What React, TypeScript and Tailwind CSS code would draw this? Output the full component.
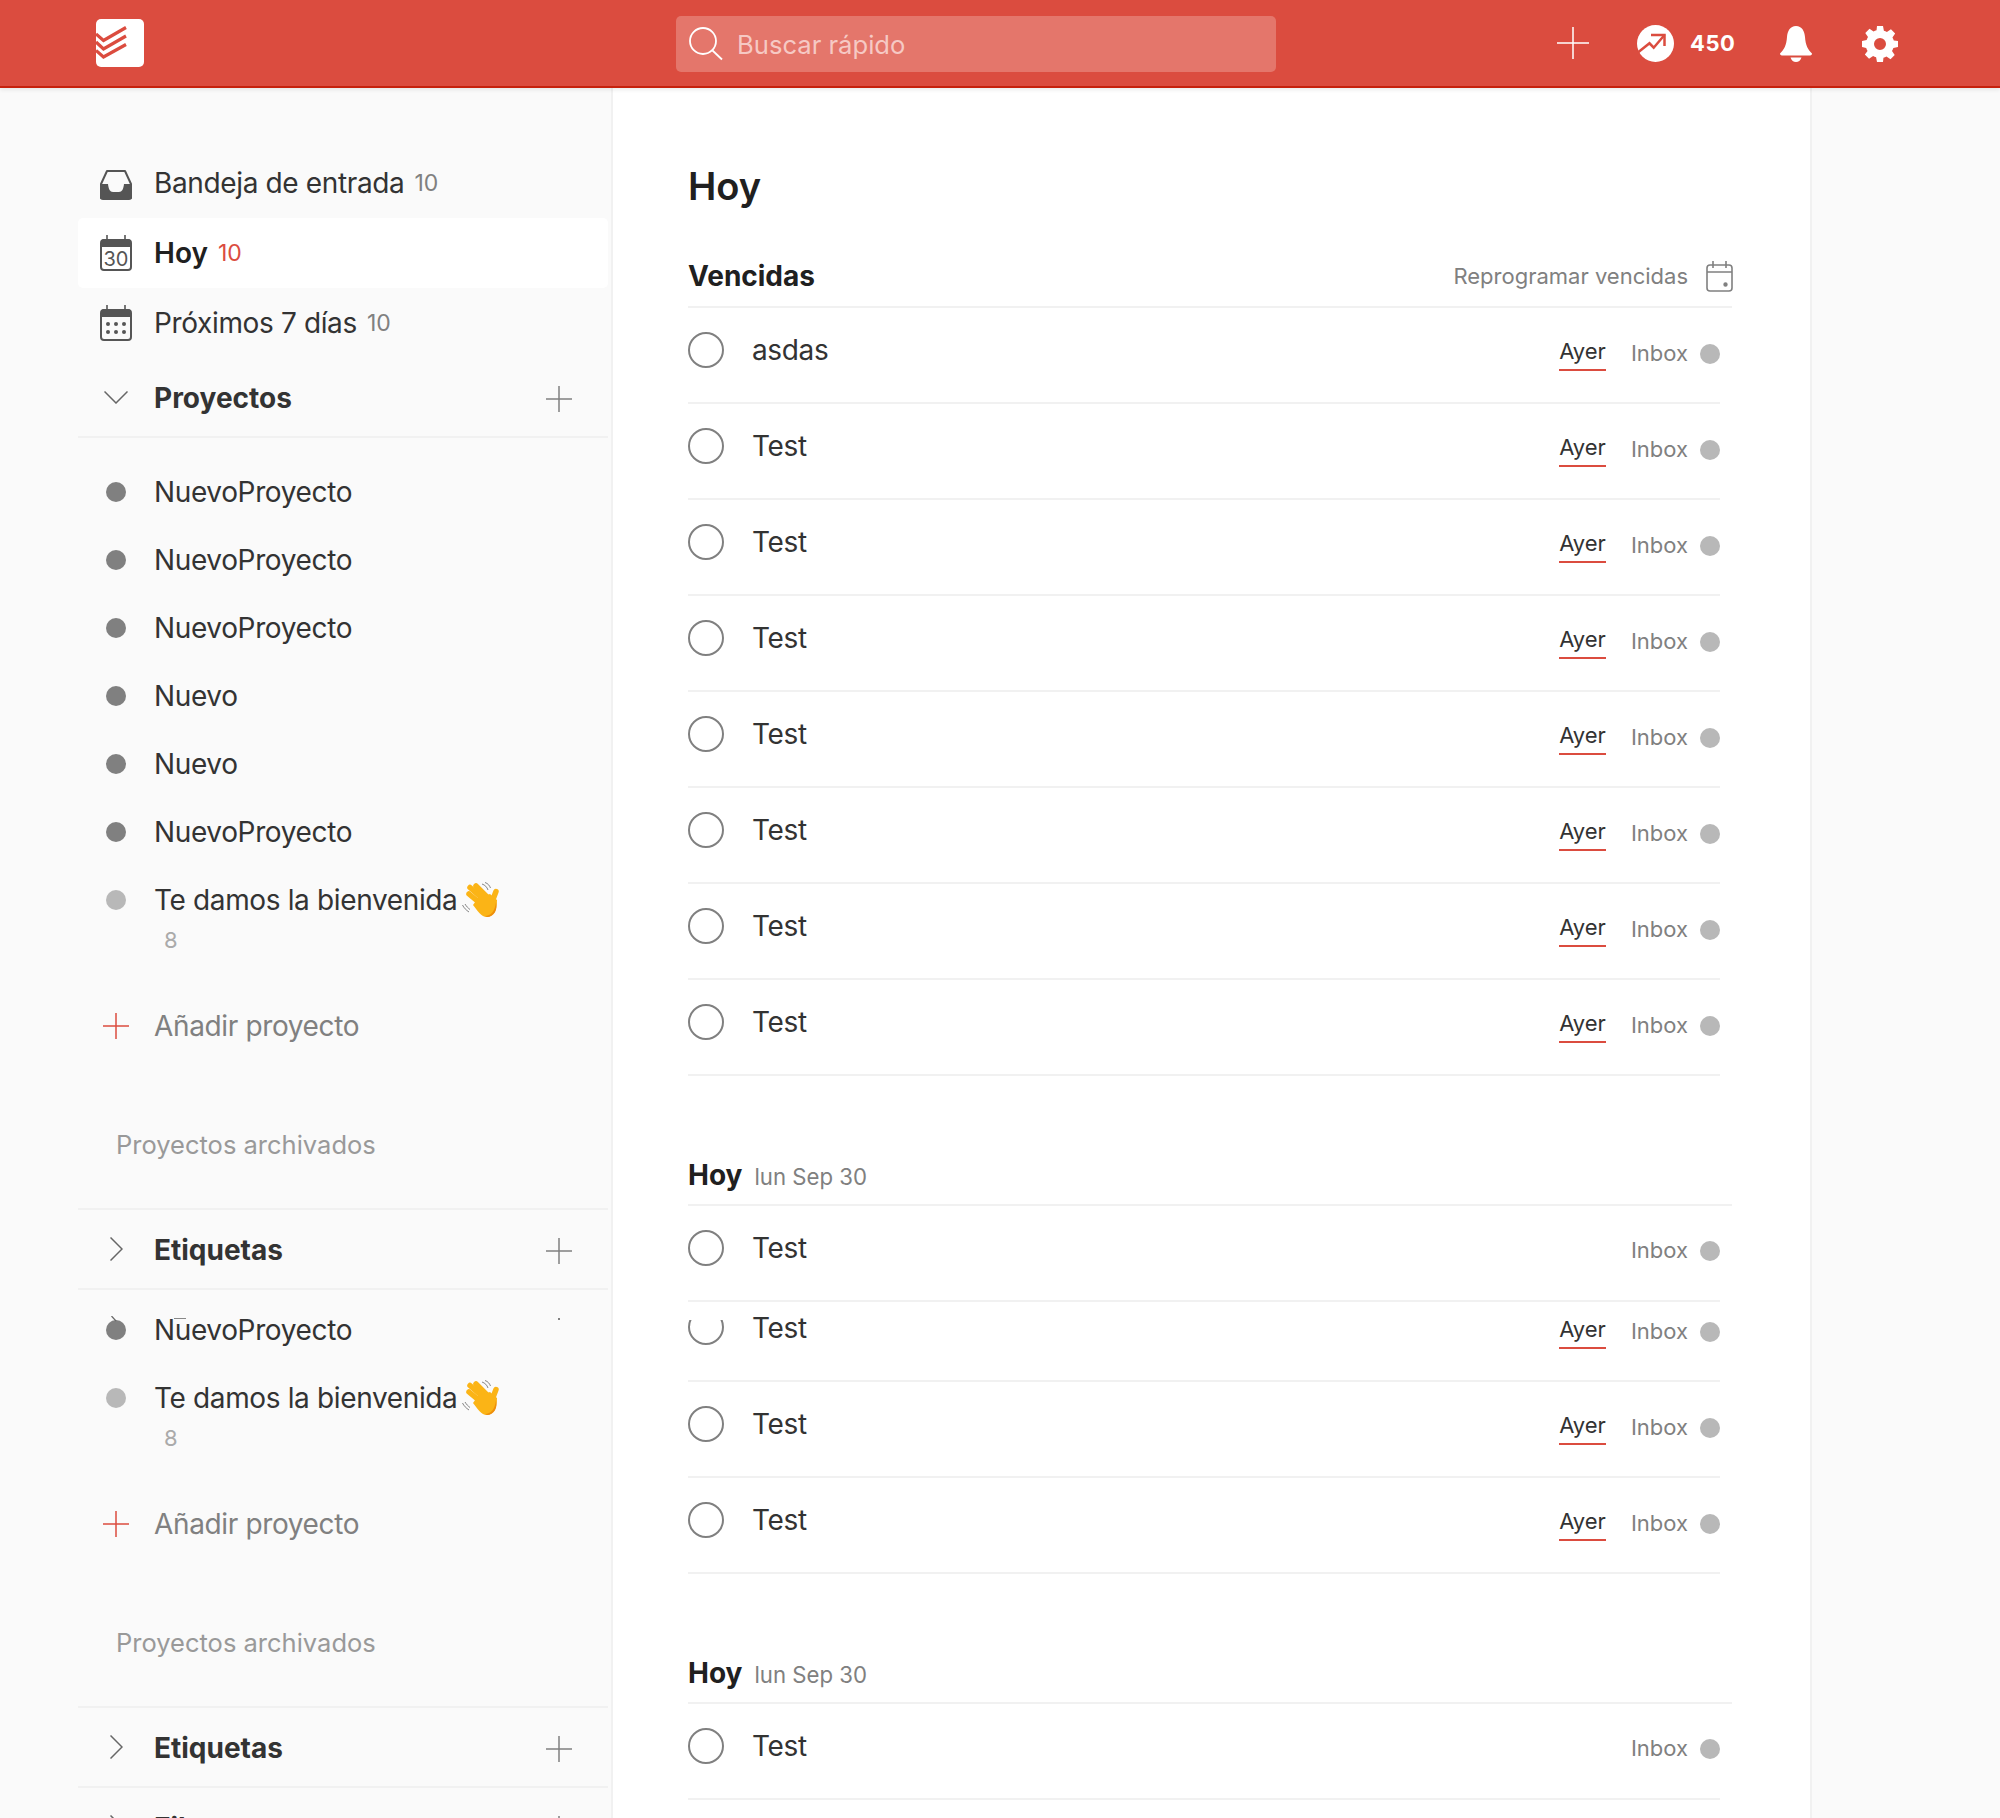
const font = "font-['Inter','Noto_Sans',sans-serif]"

function Logo() {
  return (
    <div className="h-12 w-12 overflow-hidden rounded-[5px] bg-white">
      <svg width="48" height="48" viewBox="0 0 48 48" fill="none" stroke="#db4c3f" strokeWidth="3.2">
        <path d="M0 15 L7.500 21.500 L30 8.500" />
        <path d="M0 23 L7.500 30 L30 17" />
        <path d="M0 31.500 L7.500 38 L30 25.500" />
      </svg>
    </div>
  )
}

function Thin({ className, size = 26, color = "#808080" }: { className?: string; size?: number; color?: string }) {
  return (
    <svg className={className} width={size} height={size} viewBox="0 0 26 26" stroke={color} strokeWidth={(1.5 * 26) / size}>
      <path d="M13 0V26M0 13H26" />
    </svg>
  )
}

function Header() {
  return (
    <header className="relative z-10 flex h-[88px] items-center border-b-2 border-[#c6210d] bg-[#db4c3f] pl-24 shadow-[0_2px_4px_rgba(0,0,0,0.08)]">
      <Logo />
      <div className="ml-[532px] mt-[1px] flex h-14 w-[600px] items-center rounded-[5px] bg-[#e4766b] pl-[13px]">
        <svg width="36" height="36" viewBox="0 0 36 36" fill="none" stroke="#fff" strokeWidth="1.8">
          <circle cx="14" cy="15" r="13" />
          <path d="M23.500 24.500L33 33.500" />
        </svg>
        <span className="ml-[12px] pt-[4px] text-[25.6px] text-[#f6c9c4]">Buscar rápido</span>
      </div>
      <Thin className="ml-[281px]" size={32} color="#fff" />
      <svg className="ml-12" width="37" height="37" viewBox="0 0 37 37">
        <circle cx="18.500" cy="18.500" r="18.500" fill="#fff" />
        <path d="M1.500 27L12.500 18.300L16.700 22.700L27.500 10" fill="none" stroke="#db4c3f" strokeWidth="2.500" />
        <path d="M14 10H27.500V21" fill="none" stroke="#db4c3f" strokeWidth="2.500" />
      </svg>
      <span className="ml-[16px] text-[22px] font-bold tracking-[0.5px] text-white">450</span>
      <svg className="ml-[45px] mt-[1px]" width="32" height="36" viewBox="0 0 32 36" fill="#fff">
        <path d="M16 0C10 0 7.500 5 7 11C6.500 19 4 24 0 27.500C0 29 1 29.500 3 29.500H29C31 29.500 32 29 32 27.500C28 24 25.500 19 25 11C24.500 5 22 0 16 0Z" />
        <path d="M10.500 31.500H21.500C20.500 34.500 18.500 36 16 36C13.500 36 11.500 34.500 10.500 31.500Z" />
      </svg>
      <svg className="ml-[50px] mt-[1px]" width="36" height="36" viewBox="0 0 24 24" fill="#fff">
        <path
          fillRule="evenodd"
          d="M10 0h4l.6 3.100c.7.2 1.400.5 2 .9l2.700-1.800 2.800 2.800-1.800 2.700c.4.6.7 1.300.9 2L24 10v4l-3.100.6c-.2.7-.5 1.400-.9 2l1.800 2.700-2.800 2.800-2.700-1.800c-.6.4-1.300.7-2 .9L14 24h-4l-.6-3.100c-.7-.2-1.400-.5-2-.9l-2.700 1.800-2.800-2.800L3.700 16.600c-.4-.6-.7-1.300-.9-2L0 14v-4l3.100-.6c.2-.7.5-1.400.9-2L2.200 4.700 5 1.900l2.700 1.800c.6-.4 1.300-.7 2-.9L10 0Zm2 8a4 4 0 1 0 0 8 4 4 0 0 0 0-8Z"
        />
      </svg>
    </header>
  )
}

function InboxIcon() {
  return (
    <svg className="mt-1" width="32" height="30" viewBox="0 0 32 30">
      <path d="M7 1H25L31 14V28H1V14Z" fill="none" stroke="#555" strokeWidth="2" strokeLinejoin="round" />
      <path d="M0 14H8C8.500 19 10 22 13 22H19C22 22 23.500 19 24 14H32V27C32 29 31 30 29 30H3C1 30 0 29 0 27Z" fill="#555" />
    </svg>
  )
}

function CalIcon({ children }: { children: React.ReactNode }) {
  return (
    <svg width="32" height="36" viewBox="0 0 32 36">
      <path d="M7 0V5M25 0V5" stroke="#555" strokeWidth="1.600" />
      <rect x="1" y="5" width="30" height="30" rx="3" fill="none" stroke="#555" strokeWidth="2" />
      <path d="M1 8C1 6 2 4 4 4H28C30 4 31 6 31 8V12H1Z" fill="#555" />
      {children}
    </svg>
  )
}

function TodayIcon() {
  return (
    <CalIcon>
      <text x="16" y="31" textAnchor="middle" fontSize="20" fontFamily="Inter" fill="#555">30</text>
    </CalIcon>
  )
}

function WeekIcon() {
  return (
    <CalIcon>
      {[8, 16, 24].map((x) => (
        <g key={x} fill="#555">
          <circle cx={x} cy="19" r="2" />
          <circle cx={x} cy="27" r="2" />
        </g>
      ))}
    </CalIcon>
  )
}

function Wave() {
  return (
    <svg className="ml-[5px] inline-block" width="38" height="36" viewBox="8 8 38 36">
      <g fill="none" stroke="#fbb416" strokeWidth="5.500" strokeLinecap="round">
        <path d="M15 20L27 30" />
        <path d="M16 13.500L29 25" />
        <path d="M22 12L33 23" />
        <path d="M42 17.500L38 28" />
      </g>
      <path d="M24 24L36 20L43 26C43 36 40 42 33 43C27 43 24 37 19 31Z" fill="#fbb416" />
      <path d="M31 42C37 42 41 37 42 28C44 36 40 43 33 43Z" fill="#ee8f0b" />
      <path d="M28 10C31 11 33 13 34 16M31 8.500C34 9.500 35.500 11.500 36.500 14M8.500 31C10 34 12 36 15 38M11 30C12.500 32.500 14 34 16 35.500" fill="none" stroke="#777" strokeWidth="0.900" />
    </svg>
  )
}

function NavRow({ icon, label, count, active }: { icon: React.ReactNode; label: string; count: string; active?: boolean }) {
  return (
    <div className={`flex h-[70px] items-center rounded-[5px] ${active ? "bg-white" : ""}`}>
      <div className="flex w-[76px] justify-center">{icon}</div>
      <span className={`text-[28px] ${active ? "font-semibold text-[#202020]" : "tracking-[-0.36px] text-[#333]"}`}>{label}</span>
      <span className={`ml-[10px] text-[23px] ${active ? "text-[#db4c3f]" : "text-[#808080]"}`}>{count}</span>
    </div>
  )
}

function SectionHead({ label, open, topBorder }: { label: string; open?: boolean; topBorder?: boolean }) {
  return (
    <div className={`flex items-center border-b-2 border-[#f1f1f1] pr-[36px] ${topBorder ? "h-[82px] border-t-2" : "h-[80px]"}`}>
      <div className="flex w-[76px] justify-center">
        {open ? (
          <svg width="24" height="13" viewBox="0 0 24 13" fill="none" stroke="#666" strokeWidth="1.500">
            <path d="M0.500 0.500L12 12L23.500 0.500" />
          </svg>
        ) : (
          <svg width="13" height="24" viewBox="0 0 13 24" fill="none" stroke="#666" strokeWidth="1.500">
            <path d="M0.500 0.500L12 12L0.500 23.500" />
          </svg>
        )}
      </div>
      <span className="flex-1 pt-[2px] text-[28px] font-bold text-[#333]">{label}</span>
      <Thin className="mt-[4px]" />
    </div>
  )
}

function ProjectRow({ label, light }: { label: string; light?: boolean }) {
  return (
    <div className="flex h-[68px] items-center">
      <div className="flex w-[76px] justify-center">
        <div className={`h-5 w-5 rounded-full ${light ? "bg-[#b8b8b8]" : "bg-[#808080]"}`} />
      </div>
      <span className="text-[28px] tracking-[-0.36px] text-[#333]">{label}</span>
    </div>
  )
}

function WelcomeRow() {
  return (
    <div className="flex h-[108px] items-start pt-[14px]">
      <div className="flex h-[40px] w-[76px] items-center justify-center">
        <div className="h-5 w-5 rounded-full bg-[#b8b8b8]" />
      </div>
      <div>
        <div className="flex h-[40px] items-center text-[28px] tracking-[-0.36px] text-[#333]">
          Te damos la bienvenida
          <Wave />
        </div>
        <div className="pl-[10px] pt-[4px] text-[22px] text-[#aaa]">8</div>
      </div>
    </div>
  )
}

function AddProject() {
  return (
    <>
      <div className="mt-[12px] flex h-[80px] items-center">
        <div className="flex w-[76px] justify-center">
          <Thin color="#db4c3f" />
        </div>
        <span className="text-[28px] tracking-[-0.36px] text-[#808080]">Añadir proyecto</span>
      </div>
      <div className="mb-[19px] mt-[23px] flex h-[100px] items-center pl-[38px] pt-[12px] text-[25.500px] text-[#999]">Proyectos archivados</div>
    </>
  )
}

function Sidebar() {
  return (
    <aside className="w-[611px] shrink-0 pl-[78px] pr-[3px] pt-[60px]">
      <NavRow icon={<InboxIcon />} label="Bandeja de entrada" count="10" />
      <NavRow icon={<TodayIcon />} label="Hoy" count="10" active />
      <NavRow icon={<WeekIcon />} label="Próximos 7 días" count="10" />
      <SectionHead label="Proyectos" open />
      <div className="pt-[20px]">
        <ProjectRow label="NuevoProyecto" />
        <ProjectRow label="NuevoProyecto" />
        <ProjectRow label="NuevoProyecto" />
        <ProjectRow label="Nuevo" />
        <ProjectRow label="Nuevo" />
        <ProjectRow label="NuevoProyecto" />
        <WelcomeRow />
        <AddProject />
      </div>
      <SectionHead label="Etiquetas" topBorder />
      <div className="relative pt-[6px]">
        <ProjectRow label="NuevoProyecto" />
        <WelcomeRow />
        <AddProject />
        {/* leftovers of the header row peeking through */}
        <svg className="absolute left-[33px] top-[26px]" width="6" height="6" viewBox="0 0 6 6" fill="none" stroke="#666" strokeWidth="1.200">
          <path d="M0.500 0L5 5" />
        </svg>
        <div className="absolute left-[96px] top-[28px] h-[1px] w-[12px] bg-[#888]" />
        <div className="absolute left-[480px] top-[28px] h-[2px] w-[2px] bg-[#808080]" />
      </div>
      <SectionHead label="Etiquetas" topBorder />
      <SectionHead label="Filtros" />
    </aside>
  )
}

function Task({ label, ayer = true, className = "h-[96px]", glitch }: { label: string; ayer?: boolean; className?: string; glitch?: boolean }) {
  return (
    <div className={`flex w-[1032px] items-start overflow-hidden border-b-2 border-[#f1f1f1] ${className}`}>
      <div className={`${glitch ? "mt-[18px] h-[25px] w-[36px] overflow-hidden" : "mt-[24px] h-9 w-9"} shrink-0`}>
        <div className={`h-9 w-9 rounded-full border-2 border-[#808080] ${glitch ? "-mt-[11px]" : ""}`} />
      </div>
      <span className={`ml-7 flex-1 text-[28px] tracking-[-0.36px] text-[#333] ${glitch ? "mt-[5px]" : "mt-[21px]"}`}>{label}</span>
      <div className={`flex items-center ${glitch ? "mt-[12px]" : "mt-[28px]"}`}>
        {ayer && (
          <span className="mr-[25px] block h-[35px] border-b-2 border-[#db4c3f] text-[22px] leading-[30px] text-[#333]">Ayer</span>
        )}
        <span className="h-[34px] text-[22px] leading-[32px] text-[#808080]">Inbox</span>
        <div className="ml-[12px] h-5 w-5 rounded-full bg-[#b8b8b8]" />
      </div>
    </div>
  )
}

function DayHead() {
  return (
    <div className="flex h-[62px] w-[1044px] items-end gap-3 border-b-2 border-[#f1f1f1] pb-[11px]">
      <span className="text-[28px] font-bold leading-[36px] text-[#202020]">Hoy</span>
      <span className="text-[22.200px] leading-[32px] text-[#808080]">lun Sep 30</span>
    </div>
  )
}

function Main() {
  return (
    <main className="h-full w-[1201px] shrink-0 border-x-2 border-[#f1f1f1] bg-white pl-[75px]">
      <h1 className="pt-[74px] text-[38px] font-semibold leading-[48px] text-[#202020]">Hoy</h1>
      <div className="mt-[48px] flex h-[50px] w-[1044px] items-center border-b-2 border-[#f1f1f1] pb-[12px]">
        <span className="flex-1 text-[28px] font-bold text-[#202020]">Vencidas</span>
        <span className="text-[22px] text-[#808080]">Reprogramar vencidas</span>
        <svg className="-mr-[1px] ml-[18px]" width="27" height="31" viewBox="0 0 27 31" fill="none" stroke="#808080" strokeWidth="1.600">
          <rect x="1" y="4" width="25" height="26" rx="3" />
          <path d="M1 11H26M7 0V7M20 0V7" />
          <circle cx="19.500" cy="23.500" r="1.400" fill="#808080" />
        </svg>
      </div>
      <Task label="asdas" />
      {Array.from({ length: 7 }, (_, i) => (
        <Task key={i} label="Test" />
      ))}
      <div className="h-[68px]" />
      <DayHead />
      <Task label="Test" ayer={false} />
      <Task label="Test" className="h-[80px]" glitch />
      <Task label="Test" />
      <Task label="Test" />
      <div className="h-[68px]" />
      <DayHead />
      <Task label="Test" ayer={false} />
    </main>
  )
}

export default function App() {
  return (
    <div className={`h-[1818px] w-[2000px] overflow-hidden bg-[#fafafa] ${font}`}>
      <Header />
      <div className="flex h-[1730px]">
        <Sidebar />
        <Main />
      </div>
    </div>
  )
}
